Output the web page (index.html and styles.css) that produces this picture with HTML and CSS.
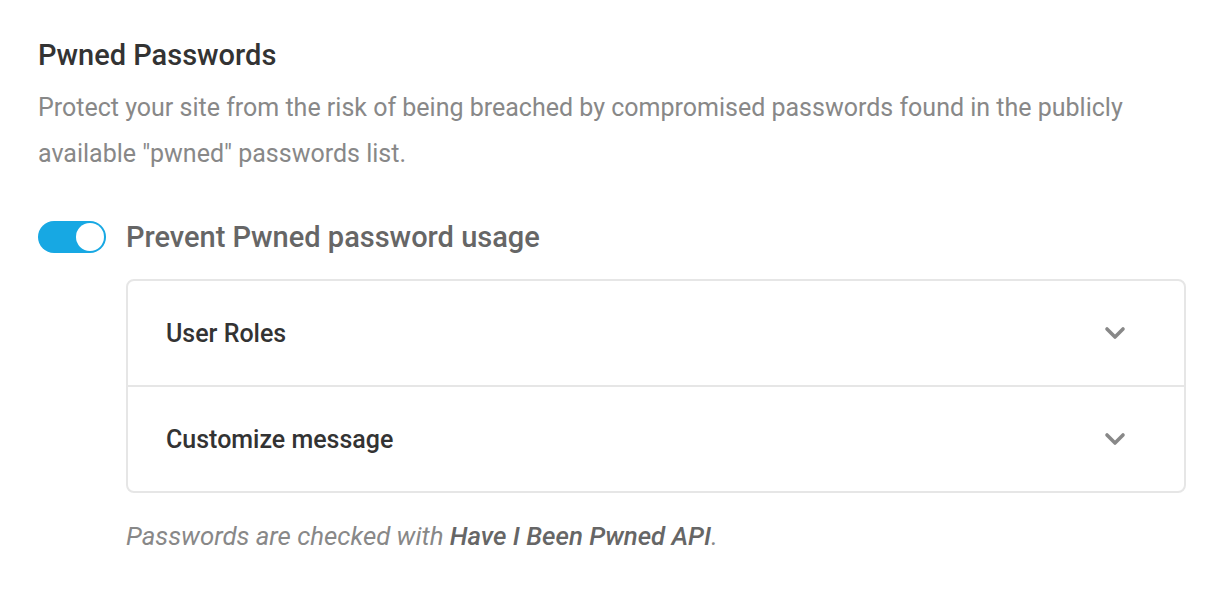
FILE: index.html
```html
<!DOCTYPE html>
<html lang="en">
<head>
    <meta charset="UTF-8">
    <title>Pwned Passwords</title>
    <link rel="stylesheet" href="styles.css">
</head>
<body>
    <div class="settings">
        <h2 class="title">Pwned Passwords</h2>
        <p class="desc">Protect your site from the risk of being breached by compromised passwords found in the publicly available "pwned" passwords list.</p>

        <div class="toggle-row">
            <span class="toggle"><span class="knob"></span></span>
            <span class="toggle-label">Prevent Pwned password usage</span>
        </div>

        <div class="options">
            <div class="accordion">
                <div class="acc-item">
                    <span class="acc-title">User Roles</span>
                    <svg class="chevron" width="22" height="14" viewBox="0 0 22 14"><path d="M3 3l8 8 8-8" fill="none" stroke="#888" stroke-width="3.6" stroke-linecap="round" stroke-linejoin="round"/></svg>
                </div>
                <div class="acc-item">
                    <span class="acc-title">Customize message</span>
                    <svg class="chevron" width="22" height="14" viewBox="0 0 22 14"><path d="M3 3l8 8 8-8" fill="none" stroke="#888" stroke-width="3.6" stroke-linecap="round" stroke-linejoin="round"/></svg>
                </div>
            </div>
            <p class="note">Passwords are checked with <strong>Have I Been Pwned API</strong>.</p>
        </div>
    </div>
</body>
</html>
```

FILE: styles.css
```css
body {
    margin: 0;
    background: #ffffff;
    font-family: Roboto, "Liberation Sans", sans-serif;
}

.settings {
    padding: 38px 34px 0 38px;
}

.title {
    margin: 0;
    font-size: 29px;
    font-weight: 500;
    color: #333333;
    line-height: 34px;
}

.desc {
    margin: 13px 0 0;
    font-size: 25px;
    line-height: 46px;
    color: #888888;
    max-width: 1100px;
}

.toggle-row {
    display: flex;
    align-items: center;
    gap: 20px;
    height: 34px;
    margin-top: 43px;
}

.toggle {
    width: 68px;
    height: 32px;
    border-radius: 16px;
    background: #17a8e3;
    display: flex;
    align-items: center;
    justify-content: flex-end;
    box-sizing: border-box;
    padding: 2px;
}

.knob {
    width: 28px;
    height: 28px;
    border-radius: 50%;
    background: #ffffff;
}

.toggle-label {
    font-size: 29px;
    font-weight: 500;
    color: #666666;
}

.options {
    margin: 25px 0 0 88px;
}

.accordion {
    border: 2px solid #e6e6e6;
    border-radius: 8px;
}

.acc-item {
    display: flex;
    align-items: center;
    justify-content: space-between;
    height: 104px;
    padding: 0 58px 0 38px;
}

.acc-item + .acc-item {
    border-top: 2px solid #e6e6e6;
}

.acc-title {
    font-size: 25px;
    font-weight: 500;
    color: #333333;
}

.note {
    margin: 28px 0 0;
    font-size: 25.8px;
    line-height: 30px;
    font-style: italic;
    color: #888888;
}

.note strong {
    font-weight: 500;
    color: #666666;
}
```
